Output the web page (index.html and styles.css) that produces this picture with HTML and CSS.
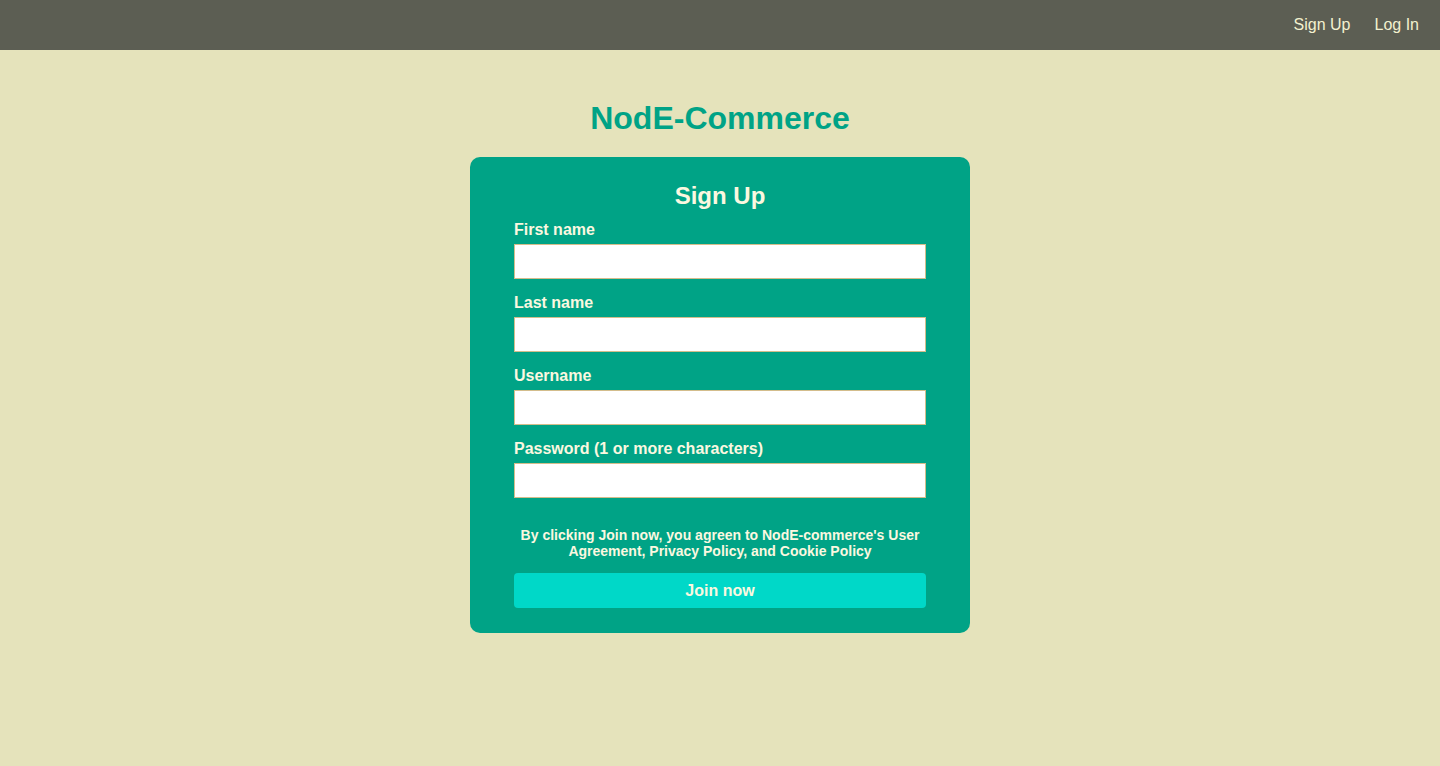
FILE: index.html
```html
<!DOCTYPE html>
<html lang="en">
<head>
<meta charset="utf-8">
<title>NodE-Commerce — Sign Up</title>
<link rel="stylesheet" href="styles.css">
</head>
<body>
<header class="topbar">
  <nav class="nav">
    <a class="nav-link" href="#">Sign Up</a>
    <a class="nav-link" href="#">Log In</a>
  </nav>
</header>
<main class="main">
  <h1 class="brand">NodE-Commerce</h1>
  <form class="card">
    <h2 class="card-title">Sign Up</h2>
    <div class="field">
      <label class="label">First name</label>
      <input class="input" type="text">
    </div>
    <div class="field">
      <label class="label">Last name</label>
      <input class="input" type="text">
    </div>
    <div class="field">
      <label class="label">Username</label>
      <input class="input" type="text">
    </div>
    <div class="field">
      <label class="label">Password (1 or more characters)</label>
      <input class="input" type="password">
    </div>
    <p class="terms">By clicking Join now, you agreen to NodE-commerce's User Agreement, Privacy Policy, and Cookie Policy</p>
    <button class="btn" type="button">Join now</button>
  </form>
</main>
</body>
</html>
```
FILE: styles.css
```css
html, body {
  margin: 0;
  padding: 0;
}
body {
  background: #e5e3bb;
  font-family: "Liberation Sans", Arial, Helvetica, sans-serif;
  min-height: 766px;
}
.topbar {
  height: 50px;
  background: #5c5e53;
  display: flex;
  align-items: center;
  justify-content: flex-end;
  padding-right: 21px;
}
.nav {
  display: flex;
  gap: 24px;
}
.nav-link {
  color: #f3f1cf;
  text-decoration: none;
  font-size: 16px;
  line-height: 18px;
}
.main {
  display: flex;
  flex-direction: column;
  align-items: center;
}
.brand {
  margin: 50px 0 20px;
  font-size: 32px;
  line-height: 37px;
  font-weight: bold;
  color: #00a386;
}
.card {
  width: 500px;
  box-sizing: border-box;
  background: #00a386;
  border-radius: 10px;
  padding: 25px 44px 25px;
  display: flex;
  flex-direction: column;
  color: #fbf8e0;
}
.card-title {
  margin: 0 0 11px;
  text-align: center;
  font-size: 24px;
  line-height: 28px;
  font-weight: bold;
}
.field {
  display: flex;
  flex-direction: column;
  margin-bottom: 15px;
}
.field:last-of-type {
  margin-bottom: 29px;
}
.label {
  font-size: 16px;
  line-height: 18px;
  font-weight: bold;
  margin-bottom: 5px;
}
.input {
  height: 35px;
  box-sizing: border-box;
  margin: 0;
  border: 1px solid #d3bd8c;
  background: #ffffff;
  font-family: inherit;
  font-size: 16px;
  padding: 4px 8px;
}
.terms {
  margin: 0 0 14px;
  text-align: center;
  font-size: 14px;
  line-height: 16px;
  font-weight: bold;
}
.btn {
  height: 35px;
  border: none;
  border-radius: 4px;
  background: #00d8c8;
  color: #fbf8e0;
  font-family: inherit;
  font-size: 16px;
  font-weight: bold;
  cursor: pointer;
}
```
